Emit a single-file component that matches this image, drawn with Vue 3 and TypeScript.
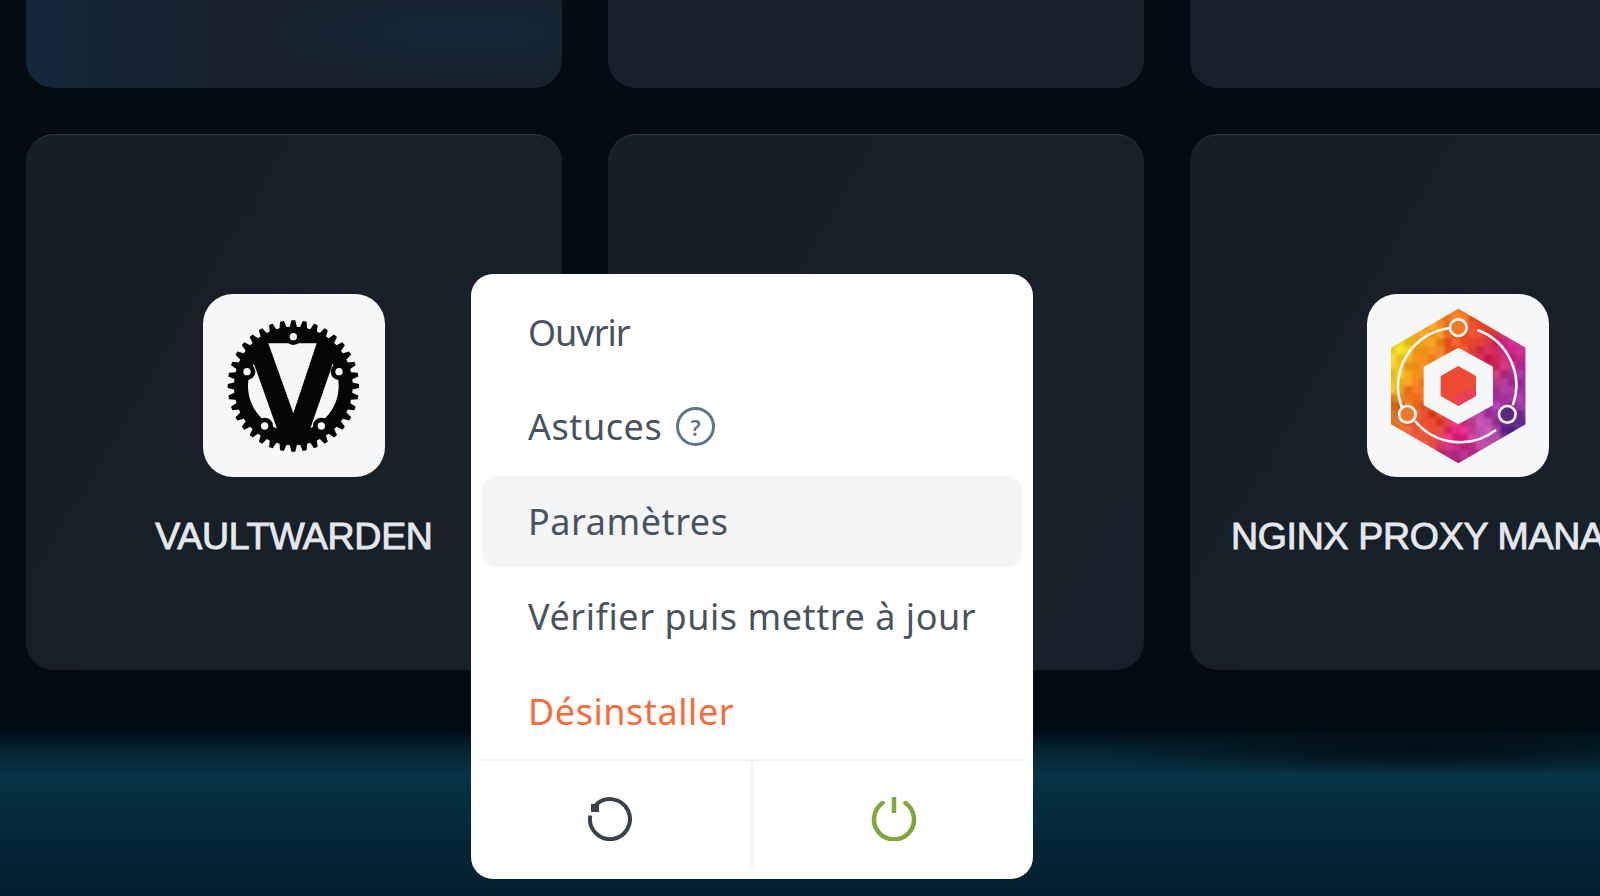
<script setup lang="ts">
import { computed } from 'vue'

interface MenuItem {
  label: string
  hint?: boolean
  active?: boolean
  danger?: boolean
  tight?: boolean
}

const menuItems: MenuItem[] = [
  { label: 'Ouvrir', tight: true },
  { label: 'Astuces', hint: true },
  { label: 'Paramètres', active: true },
  { label: 'Vérifier puis mettre à jour' },
  { label: 'Désinstaller', danger: true },
]

// sprocket outline of the vaultwarden logo
const sprocketPath = computed(() => {
  const teeth = 36
  const cx = 235
  const cy = 240
  const pts: string[] = []
  for (let i = 0; i < teeth; i++) {
    const step = (Math.PI * 2) / teeth
    const a = i * step - Math.PI / 2
    const corners: [number, number][] = [
      [a - step * 0.5, 178],
      [a - step * 0.34, 178],
      [a - step * 0.17, 197],
      [a + step * 0.17, 197],
      [a + step * 0.34, 178],
    ]
    for (const [ang, r] of corners) {
      pts.push(`${(cx + r * Math.cos(ang)).toFixed(1)},${(cy + r * Math.sin(ang)).toFixed(1)}`)
    }
  }
  return 'M' + pts.join('L') + 'Z'
})

const sprocketHoles = [
  { x: 235, y: 92 },
  { x: 96, y: 197 },
  { x: 372, y: 197 },
  { x: 149, y: 360 },
  { x: 319, y: 360 },
]

// colour anchors of the nginx proxy manager hexagon
const anchors: [number, number, number, number, number][] = [
  [235, 30, 245, 120, 30],
  [150, 80, 248, 160, 30],
  [60, 130, 232, 215, 30],
  [45, 220, 240, 200, 30],
  [110, 170, 248, 145, 30],
  [100, 260, 245, 120, 35],
  [50, 320, 215, 110, 30],
  [160, 345, 225, 60, 35],
  [120, 390, 240, 90, 60],
  [235, 390, 232, 40, 135],
  [235, 450, 170, 40, 130],
  [310, 380, 190, 80, 175],
  [400, 370, 90, 40, 140],
  [350, 310, 165, 55, 165],
  [420, 230, 165, 50, 160],
  [380, 130, 205, 40, 140],
  [330, 150, 205, 35, 75],
  [300, 70, 232, 70, 45],
  [235, 100, 240, 85, 35],
]

function mixColor(x: number, y: number): string {
  let sum = 0
  const c = [0, 0, 0]
  for (const [ax, ay, r, g, b] of anchors) {
    const w = 1 / Math.pow((x - ax) ** 2 + (y - ay) ** 2 + 60, 1.6)
    sum += w
    c[0] += r * w
    c[1] += g * w
    c[2] += b * w
  }
  // small jitter so the hexagon looks faceted
  const jitter = (Math.sin(x * 12.9 + y * 78.2) * 43758.5) % 1
  const d = jitter * 18
  return `rgb(${Math.round(c[0] / sum + d)},${Math.round(c[1] / sum + d)},${Math.round(c[2] / sum + d)})`
}

const mosaic = computed(() => {
  const cells: { x: number; y: number; fill: string }[] = []
  for (let y = 0; y < 480; y += 24) {
    for (let x = 24; x < 456; x += 24) {
      cells.push({ x, y, fill: mixColor(x + 12, y + 12) })
    }
  }
  return cells
})
</script>

<template>
  <div class="page">
    <div class="grid">
      <div class="card card--top card--tint"></div>
      <div class="card card--top"></div>
      <div class="card card--top"></div>

      <div class="card">
        <div class="tile">
          <svg width="160" height="160" viewBox="-3 0 480 480">
            <path :d="sprocketPath" fill="#050505" />
            <circle cx="235" cy="240" r="136" fill="#f6f7f9" />
            <path d="M112 160 L160 90 L310 90 L358 160 L280 385 L192 385 Z" fill="#050505" />
            <path d="M160 112 L305 112 L235 322 Z" fill="#f6f7f9" />
            <g v-for="hole in sprocketHoles" :key="hole.x">
              <circle :cx="hole.x" :cy="hole.y" r="25" fill="#050505" />
              <circle :cx="hole.x" :cy="hole.y" r="11" fill="#f6f7f9" />
            </g>
          </svg>
        </div>
        <div class="name">VAULTWARDEN</div>
      </div>

      <div class="card"></div>

      <div class="card">
        <div class="tile">
          <svg width="160" height="160" viewBox="-6 0 480 480">
            <defs>
              <clipPath id="hexClip">
                <polygon points="235,8 437,125 437,355 235,472 33,355 33,125" />
              </clipPath>
              <filter id="soften" x="-10%" y="-10%" width="120%" height="120%">
                <feGaussianBlur stdDeviation="5" />
              </filter>
            </defs>
            <g clip-path="url(#hexClip)">
              <g filter="url(#soften)">
                <rect v-for="cell in mosaic" :key="`${cell.x}-${cell.y}`" :x="cell.x" :y="cell.y" width="25" height="25" :fill="cell.fill" />
              </g>
            </g>
            <polygon points="235,125 339,182 339,298 235,355 131,298 131,182" fill="#f6f7f9" />
            <polygon points="235,180 288,210 288,270 235,300 182,270 182,210" fill="#ee4b36" />
            <polygon points="288,240 288,270 235,300 222,270" fill="#e83a66" opacity="0.7" />
            <g fill="none" stroke="#f6f7f9" stroke-width="8">
              <path d="M212 66 A176 176 0 0 0 66 305" />
              <path d="M292 72 A176 176 0 0 1 398 298" />
              <path d="M105 345 A176 176 0 0 0 348 372" />
              <circle cx="235" cy="65" r="25" fill="#f07a2a" />
              <circle cx="82" cy="325" r="25" fill="#ee7a2a" />
              <circle cx="382" cy="325" r="25" fill="#5a2a80" />
            </g>
          </svg>
        </div>
        <div class="name">NGINX PROXY MANAGER</div>
      </div>
    </div>

    <div class="menu">
      <div class="menu__list">
        <div
          v-for="item in menuItems"
          :key="item.label"
          class="menu__item"
          :class="{
            'menu__item--active': item.active,
            'menu__item--danger': item.danger,
            'menu__item--tight': item.tight,
          }"
        >
          {{ item.label }}
          <span v-if="item.hint" class="menu__hint">?</span>
        </div>
      </div>
      <div class="menu__footer">
        <div class="menu__btn menu__btn--left">
          <svg width="48" height="48" viewBox="0 0 48 48" fill="none">
            <path d="M9.9 11.9 A20 20 0 1 1 4.3 22.5" stroke="#3a424c" stroke-width="4" />
            <rect x="5" y="11" width="8" height="8" fill="#3a424c" />
          </svg>
        </div>
        <div class="menu__btn menu__btn--right">
          <svg width="48" height="48" viewBox="0 0 48 48" fill="none">
            <path d="M12.5 10 A20 20 0 1 0 35.5 10" stroke="#7fa83a" stroke-width="4.5" stroke-linecap="round" />
            <path d="M24 4 V20" stroke="#7fa83a" stroke-width="4.5" />
          </svg>
        </div>
      </div>
    </div>
  </div>
</template>

<style scoped>
.page {
  position: relative;
  width: 1600px;
  height: 896px;
  overflow: hidden;
  background:
    radial-gradient(ellipse 340px 26px at 1420px 750px, rgba(2, 11, 18, 0.85) 0%, rgba(2, 11, 18, 0) 100%),
    linear-gradient(180deg, #030b13 0, #030b13 728px, #04222e 748px, #063446 775px, #042c3e 810px, #021e2d 896px);
}

.grid {
  display: grid;
  grid-template-columns: repeat(3, 536px);
  grid-auto-rows: 536px;
  gap: 46px;
  margin-top: -448px;
  padding-left: 26px;
}

.card {
  display: flex;
  flex-direction: column;
  align-items: center;
  padding-top: 160px;
  box-sizing: border-box;
  border-radius: 28px;
  background: linear-gradient(120deg, #181e25, #17202a);
  box-shadow: inset 0 2px 1px -1px rgba(255, 255, 255, 0.12);
}

.card--top {
  box-shadow: none;
  background: linear-gradient(180deg, #15242f, #17202a);
}

.card--tint {
  background:
    radial-gradient(ellipse 220px 50px at 440px 480px, #14283a, rgba(20, 40, 58, 0)),
    linear-gradient(90deg, #15273a, #17212b 40%);
}

.tile {
  display: flex;
  align-items: center;
  justify-content: center;
  width: 182px;
  height: 183px;
  border-radius: 30px;
  background: #f6f7f9;
}

.name {
  margin-top: 37px;
  color: #e4e8ec;
  font-family: "Liberation Sans", Arial, sans-serif;
  font-size: 37.5px;
  line-height: 44px;
  letter-spacing: -0.3px;
  -webkit-text-stroke: 0.9px #e4e8ec;
  white-space: nowrap;
}

.menu {
  position: absolute;
  top: 274px;
  left: 471px;
  width: 562px;
  height: 605px;
  box-sizing: border-box;
  display: flex;
  flex-direction: column;
  border-radius: 22px;
  background: #fff;
}

.menu__list {
  display: flex;
  flex-direction: column;
  gap: 4.2px;
  padding: 13px 11px 3px;
}

.menu__item {
  display: flex;
  align-items: center;
  gap: 14px;
  height: 90.5px;
  padding-left: 46px;
  border-radius: 14px;
  color: #49535e;
  font-family: "Noto Sans", sans-serif;
  font-size: 36px;
  letter-spacing: 0.55px;
}

.menu__item--tight {
  letter-spacing: -1px;
}

.menu__item--active {
  background: #f3f5f7;
}

.menu__item--danger {
  color: #f76b3c;
}

.menu__hint {
  display: flex;
  align-items: center;
  justify-content: center;
  width: 39px;
  height: 39px;
  box-sizing: border-box;
  border: 3px solid #5f7488;
  border-radius: 50%;
  color: #5f7488;
  font-size: 22px;
  font-weight: 600;
  letter-spacing: 0;
}

.menu__footer {
  display: grid;
  grid-template-columns: 269px 1fr;
  flex: 1;
  margin: 0 11px 11px;
  border-top: 2px solid #f0f1f3;
}

.menu__btn {
  display: flex;
  align-items: center;
  justify-content: center;
  padding-top: 4px;
}

.menu__btn--left {
  padding-right: 13px;
}

.menu__btn--right {
  padding-left: 13px;
  border-left: 2px solid #f0f1f3;
}
</style>

<style>
html,
body {
  margin: 0;
  background: #030b13;
}
</style>
